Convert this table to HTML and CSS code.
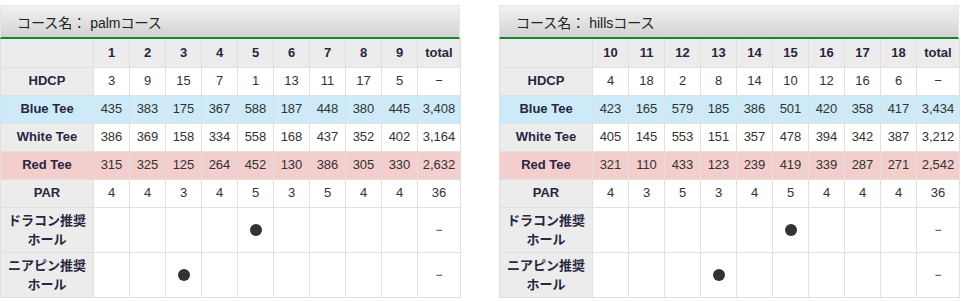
FILE: index.html
```html
<!DOCTYPE html>
<html lang="ja">
<head>
<meta charset="utf-8">
<title>コース</title>
<link rel="stylesheet" href="styles.css">
</head>
<body>
<div class="wrap">
  <section class="card">
    <h3 class="card-title">コース名： palmコース</h3>
    <table class="score">
      <colgroup><col class="c-label"><col span="9" class="c-hole"><col class="c-total"></colgroup>
      <tr class="r-head"><th></th><th>1</th><th>2</th><th>3</th><th>4</th><th>5</th><th>6</th><th>7</th><th>8</th><th>9</th><th>total</th></tr>
      <tr><th>HDCP</th><td>3</td><td>9</td><td>15</td><td>7</td><td>1</td><td>13</td><td>11</td><td>17</td><td>5</td><td>−</td></tr>
      <tr class="r-blue"><th>Blue Tee</th><td>435</td><td>383</td><td>175</td><td>367</td><td>588</td><td>187</td><td>448</td><td>380</td><td>445</td><td>3,408</td></tr>
      <tr><th>White Tee</th><td>386</td><td>369</td><td>158</td><td>334</td><td>558</td><td>168</td><td>437</td><td>352</td><td>402</td><td>3,164</td></tr>
      <tr class="r-red"><th>Red Tee</th><td>315</td><td>325</td><td>125</td><td>264</td><td>452</td><td>130</td><td>386</td><td>305</td><td>330</td><td>2,632</td></tr>
      <tr><th>PAR</th><td>4</td><td>4</td><td>3</td><td>4</td><td>5</td><td>3</td><td>5</td><td>4</td><td>4</td><td>36</td></tr>
      <tr class="r-tall"><th>ドラコン推奨<br>ホール</th><td></td><td></td><td></td><td></td><td><span class="dot"></span></td><td></td><td></td><td></td><td></td><td class="dash">−</td></tr>
      <tr class="r-tall"><th>ニアピン推奨<br>ホール</th><td></td><td></td><td><span class="dot"></span></td><td></td><td></td><td></td><td></td><td></td><td></td><td class="dash">−</td></tr>
    </table>
  </section>
  <section class="card">
    <h3 class="card-title">コース名： hillsコース</h3>
    <table class="score">
      <colgroup><col class="c-label"><col span="9" class="c-hole"><col class="c-total"></colgroup>
      <tr class="r-head"><th></th><th>10</th><th>11</th><th>12</th><th>13</th><th>14</th><th>15</th><th>16</th><th>17</th><th>18</th><th>total</th></tr>
      <tr><th>HDCP</th><td>4</td><td>18</td><td>2</td><td>8</td><td>14</td><td>10</td><td>12</td><td>16</td><td>6</td><td>−</td></tr>
      <tr class="r-blue"><th>Blue Tee</th><td>423</td><td>165</td><td>579</td><td>185</td><td>386</td><td>501</td><td>420</td><td>358</td><td>417</td><td>3,434</td></tr>
      <tr><th>White Tee</th><td>405</td><td>145</td><td>553</td><td>151</td><td>357</td><td>478</td><td>394</td><td>342</td><td>387</td><td>3,212</td></tr>
      <tr class="r-red"><th>Red Tee</th><td>321</td><td>110</td><td>433</td><td>123</td><td>239</td><td>419</td><td>339</td><td>287</td><td>271</td><td>2,542</td></tr>
      <tr><th>PAR</th><td>4</td><td>3</td><td>5</td><td>3</td><td>4</td><td>5</td><td>4</td><td>4</td><td>4</td><td>36</td></tr>
      <tr class="r-tall"><th>ドラコン推奨<br>ホール</th><td></td><td></td><td></td><td></td><td></td><td><span class="dot"></span></td><td></td><td></td><td></td><td class="dash">−</td></tr>
      <tr class="r-tall"><th>ニアピン推奨<br>ホール</th><td></td><td></td><td></td><td><span class="dot"></span></td><td></td><td></td><td></td><td></td><td></td><td class="dash">−</td></tr>
    </table>
  </section>
</div>
</body>
</html>
```
FILE: styles.css
```css
* { box-sizing: border-box; }
html, body { margin: 0; padding: 0; background: #fff; }
body {
  font-family: "Liberation Sans", "Noto Sans CJK JP", sans-serif;
  font-size: 13px;
  color: #333;
}
.wrap {
  display: flex;
  gap: 39px;
  padding-top: 5px;
}
.card {
  width: 460px;
  flex: none;
}
.card-title {
  margin: 0;
  height: 34px;
  padding: 0 0 0 16px;
  display: flex;
  align-items: center;
  font-size: 14px;
  font-weight: normal;
  color: #222;
  background: linear-gradient(#f2f2f2, #d2d2d2);
  border: 1px solid #e6e6e6;
  border-bottom: 2px solid #17842f;
}
.score {
  width: 460px;
  border-collapse: collapse;
  table-layout: fixed;
}
.c-label { width: 93px; }
.c-hole { width: 36px; }
.c-total { width: 43px; }
.score th, .score td {
  border: 1px solid #e0e0e0;
  height: 28px;
  padding: 0;
  text-align: center;
  vertical-align: middle;
  line-height: 16px;
}
.score tr:first-child th { border-top: 0; }
.score th {
  background: #ececec;
  font-weight: bold;
  color: #2a2540;
}
.score td { background: #fff; }
.r-head th { background: #ececec; }
.r-blue th, .r-blue td { background: #cdeaf8; }
.r-red th, .r-red td { background: #f4cdcd; }
.r-tall th, .r-tall td { height: 45px; }
.r-tall th { line-height: 19px; }
.dot {
  display: inline-block;
  width: 12px;
  height: 12px;
  border-radius: 50%;
  background: #333;
  vertical-align: middle;
}
.dash { font-size: 12px; }
```
